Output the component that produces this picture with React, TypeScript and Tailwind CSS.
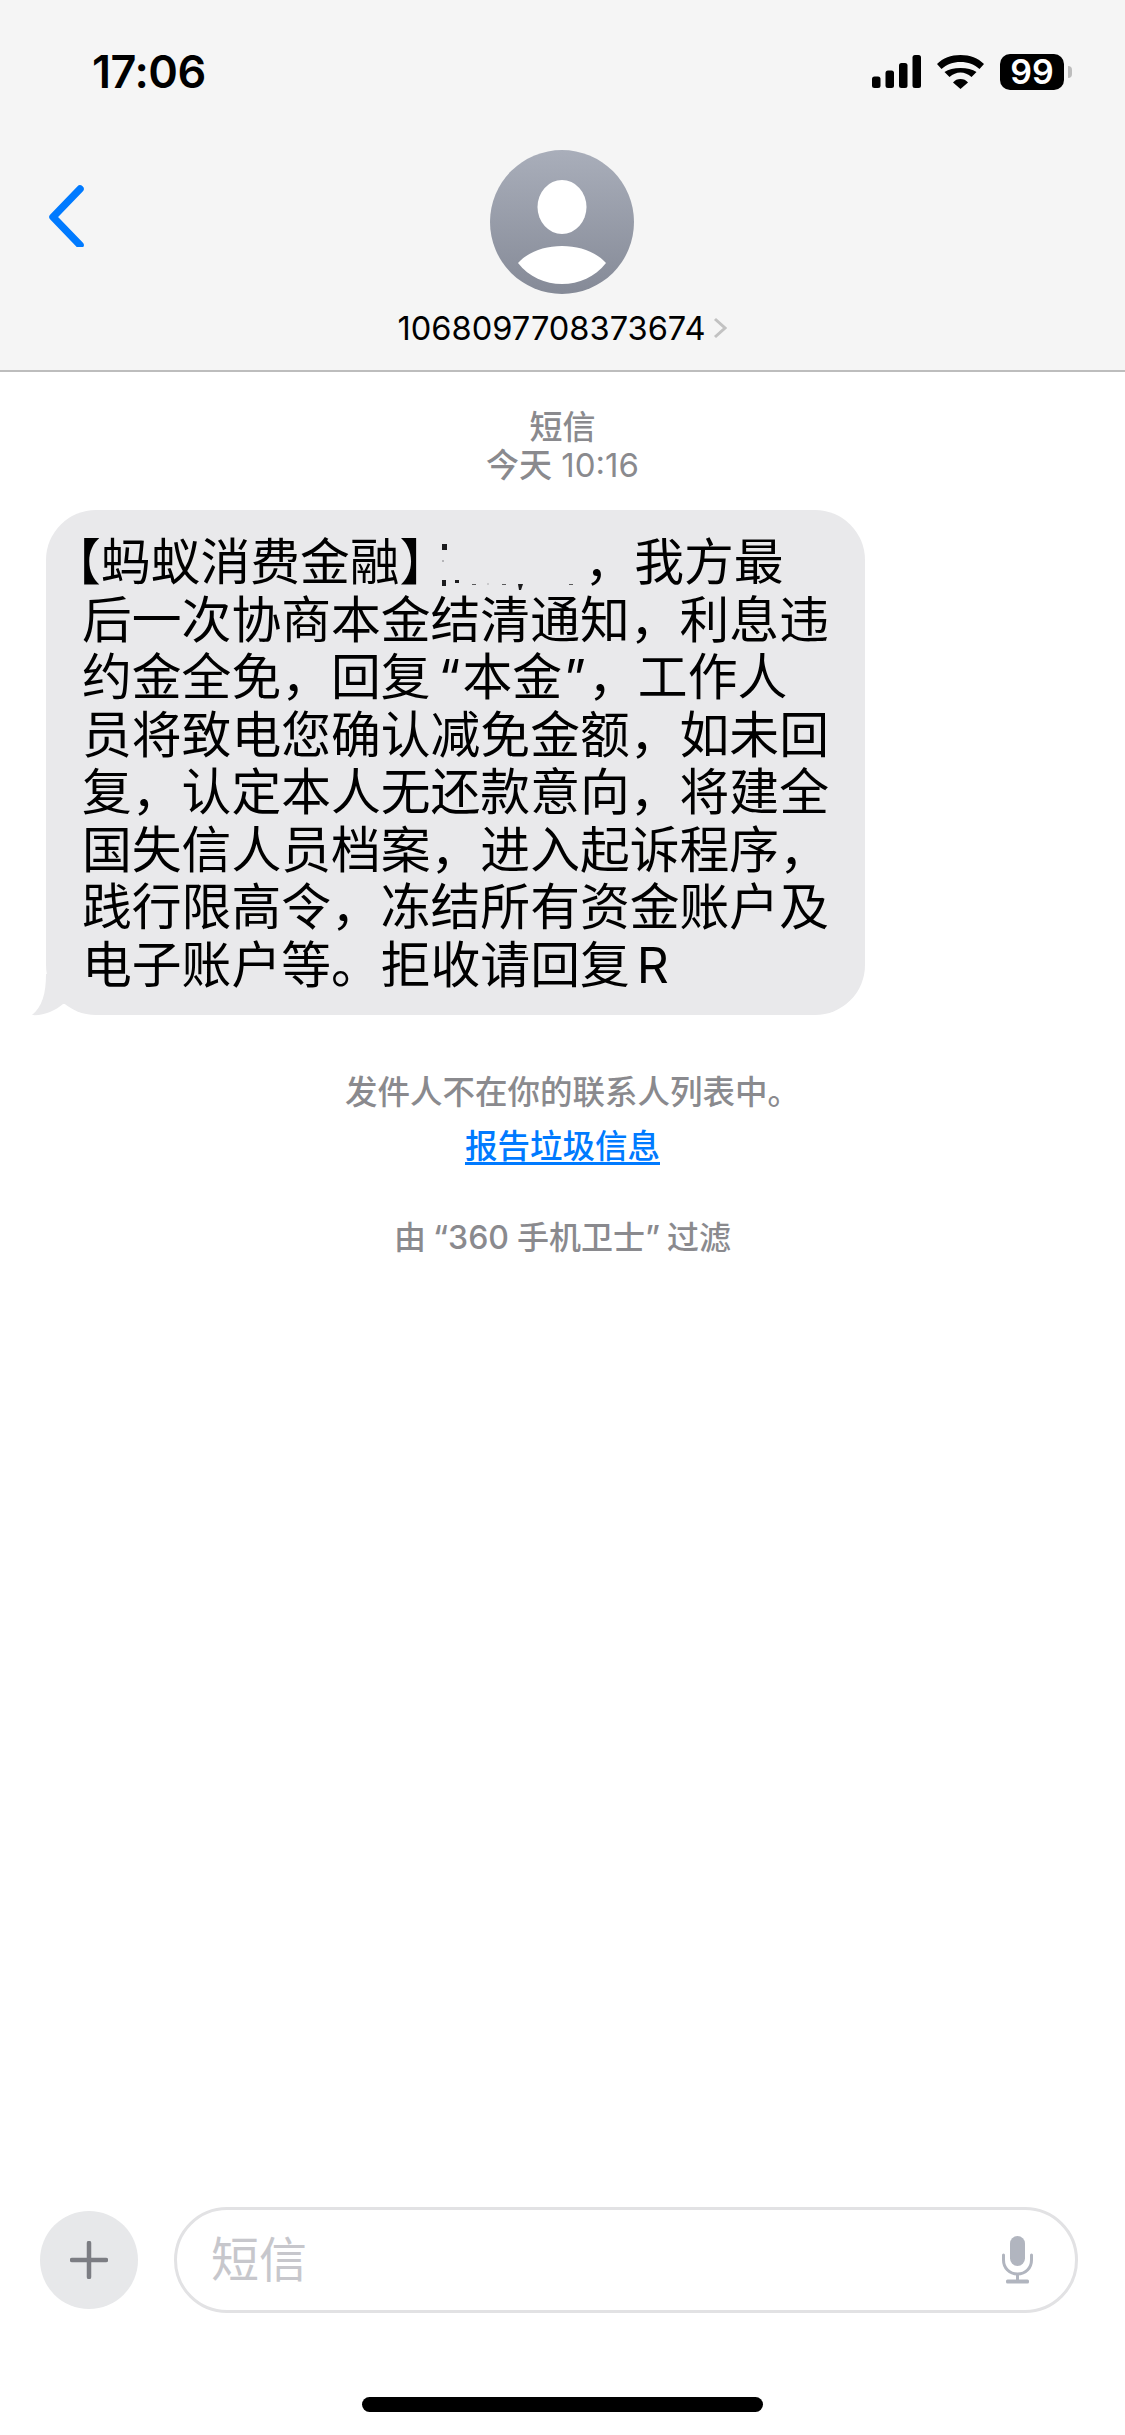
const cjk = "font-['Inter','Noto_Sans_CJK_SC',sans-serif]";

function Signal() {
  return (
    <svg width="49" height="33" viewBox="0 0 49 33" fill="#000" className="block">
      <rect x="0" y="21.500" width="8.500" height="11.500" rx="2.500" />
      <rect x="13.500" y="15.500" width="8.500" height="17.500" rx="2.500" />
      <rect x="27" y="8" width="8.500" height="25" rx="2.500" />
      <rect x="40.500" y="0" width="8.500" height="33" rx="2.500" />
    </svg>
  );
}

function Wifi() {
  return (
    <svg width="47" height="34" viewBox="0 0 47 34" fill="#000" className="block">
      <path d="M0 9C6 3 14 0 23.500 0S41 3 47 9L42.500 14C37.500 9.500 31 7 23.500 7S9.500 9.500 4.500 14Z" />
      <path d="M7.500 17C11.500 14.500 17 13 23.500 13S35.500 14.500 39.500 17L34.500 22C31 19 27.500 17.500 23.500 17.500S16 19 12.500 22Z" />
      <path d="M16 27.500C18 25 20.500 24 23.500 24S29 25 31 27.500L23.500 34Z" />
    </svg>
  );
}

function Avatar() {
  return (
    <svg width="144" height="144" viewBox="0 0 144 144" className="block">
      <defs>
        <linearGradient id="avatarFill" x1="0" y1="0" x2="0" y2="1">
          <stop offset="0" stopColor="#a9aeba" />
          <stop offset="1" stopColor="#858a97" />
        </linearGradient>
      </defs>
      <circle cx="72" cy="72" r="72" fill="url(#avatarFill)" />
      <ellipse cx="72" cy="57" rx="24.500" ry="27" fill="#fff" />
      <path d="M28 113C38 102 54 96 72 96s34 6 44 17c-11 14-27 21-44 21s-33-7-44-21z" fill="#fff" />
    </svg>
  );
}

function Smear() {
  return (
    <svg width="144" height="57" viewBox="0 0 144 57" className="-ml-[9px] block shrink-0">
      <g fill="#1c1c1e">
        <rect x="2" y="10" width="5" height="6" />
        <rect x="2" y="26" width="2" height="2" opacity="0.25" />
        <rect x="2" y="46" width="4" height="6" />
        <rect x="15" y="46" width="4" height="3" />
        <rect x="32" y="50" width="4" height="1" opacity="0.7" />
        <rect x="47" y="49" width="2" height="2" opacity="0.15" />
        <rect x="62" y="50" width="4" height="1" opacity="0.7" />
        <path d="M78 50h5l-2 6h-2z" />
        <rect x="129" y="50" width="4" height="1" opacity="0.7" />
      </g>
    </svg>
  );
}

function Mic() {
  return (
    <svg width="33" height="48" viewBox="0 0 33 48" fill="none" className="block">
      <rect x="9" y="0" width="15" height="30" rx="7.500" fill="#b1b5bf" />
      <path d="M2.500 19v5c0 8 6 14 14 14s14-6 14-14v-5" stroke="#b1b5bf" strokeWidth="3" strokeLinecap="round" />
      <path d="M16.500 38v6" stroke="#b1b5bf" strokeWidth="3" />
      <rect x="5" y="43.500" width="23" height="4" rx="1.500" fill="#b1b5bf" />
    </svg>
  );
}

export default function App() {
  return (
    <div className={`flex h-[2435px] w-[1125px] flex-col overflow-hidden bg-white ${cjk}`}>
      <header className="h-[372px] shrink-0 border-b-2 border-[#bdbdbd] bg-[#f5f5f5] pt-[45px]">
        <div className="flex h-[53px] items-center justify-between pl-[92px] pr-[61px]">
          <span className="text-[45px] leading-none font-semibold tracking-[-0.5px] text-black">17:06</span>
          <div className="flex items-center">
            <Signal />
            <div className="ml-[16px]"><Wifi /></div>
            <div className="relative ml-[16px] flex h-[36px] w-[64px] items-center justify-center rounded-[10px] bg-black">
              <span className="text-[34px] leading-none font-semibold text-white">99</span>
              <span className="absolute -right-[8px] top-[12px] h-[12px] w-[4px] rounded-r-full bg-[#bdbdbd]" />
            </div>
          </div>
        </div>
        <div className="grid grid-cols-[1fr_auto_1fr] pt-[52px]">
          <div className="pl-[47px] pt-[33px]">
            <svg width="40" height="64" viewBox="0 0 40 64" fill="none" className="block">
              <path d="M33 6L6 34l27 28" stroke="#007aff" strokeWidth="7.500" strokeLinecap="round" strokeLinejoin="round" />
            </svg>
          </div>
          <div className="flex flex-col items-center">
            <Avatar />
            <div className="mt-[14px] flex items-center">
              <span className="text-[32.600px] leading-[40px] text-black">1068097708373674</span>
              <svg width="14" height="22" viewBox="0 0 14 22" fill="none" className="ml-[8px]">
                <path d="M2 2l10 9-10 9" stroke="#c2c2c2" strokeWidth="3" />
              </svg>
            </div>
          </div>
          <div />
        </div>
      </header>

      <main className="flex flex-1 flex-col">
        <div className="mt-[36px] flex flex-col items-center text-[33px] leading-[38px] text-[#8a8a8e]">
          <span className="font-medium">短信</span>
          <span><span className="font-medium">今天</span> 10:16</span>
        </div>

        <div className="relative ml-[46px] mt-[26px] h-[505px] w-[819px] rounded-[50px] bg-[#e9e9eb] pl-[36px] pt-[24px] text-[49.800px] leading-[57.500px] text-black">
          <div className="-ml-[31px] flex h-[57.500px] whitespace-nowrap">
            <span>【蚂蚁消费金融】</span>
            <Smear />
            <span>，我方最</span>
          </div>
          <div className="h-[57.500px] whitespace-nowrap">后一次协商本金结清通知，利息违</div>
          <div className="h-[57.500px] whitespace-nowrap">
            约金全免，回复<span className="ml-[8px] mr-[2px]">“</span>本金<span className="mx-[2px]">”</span>，工作人
          </div>
          <div className="h-[57.500px] whitespace-nowrap">员将致电您确认减免金额，如未回</div>
          <div className="h-[57.500px] whitespace-nowrap">复，认定本人无还款意向，将建全</div>
          <div className="h-[57.500px] whitespace-nowrap">国失信人员档案，进入起诉程序，</div>
          <div className="h-[57.500px] whitespace-nowrap">践行限高令，冻结所有资金账户及</div>
          <div className="h-[57.500px] whitespace-nowrap">
            电子账户等。拒收请回复<span className="ml-[7px]">R</span>
          </div>
          <svg width="40" height="42" viewBox="0 0 40 42" className="absolute -left-[14px] bottom-[-1px]">
            <path d="M14 0C14 20 10 33 0 41C11 42 23 37 31 30L40 30L40 0Z" fill="#e9e9eb" />
          </svg>
        </div>

        <div className="mt-[56px] flex flex-col items-center">
          <span className="pl-[20px] text-[32.500px] leading-[44px] font-medium text-[#8a8a8e]">发件人不在你的联系人列表中。</span>
          <span className="mt-[10px] text-[32.500px] leading-[44px] font-medium text-[#007aff] underline decoration-[3px] underline-offset-[4px]">报告垃圾信息</span>
          <span className="mt-[47px] text-[32px] leading-[44px] font-medium text-[#8a8a8e]">
            由<span className="ml-[7px]">“</span>360<span className="ml-[8px]">手机卫士</span>”<span className="ml-[7px]">过滤</span>
          </span>
        </div>
      </main>

      <footer className="flex shrink-0 flex-col">
        <div className="flex items-center pl-[40px]">
          <div className="flex h-[98px] w-[98px] items-center justify-center rounded-full bg-[#e7e8ea]">
            <svg width="38" height="38" viewBox="0 0 38 38" fill="none">
              <path d="M19 2v34M2 19h34" stroke="#7c7d83" strokeWidth="4.500" strokeLinecap="round" />
            </svg>
          </div>
          <div className="ml-[36px] flex h-[106px] w-[904px] items-center justify-between rounded-[53px] border-[3px] border-[#e2e2e4] pl-[34px] pr-[41px]">
            <span className="text-[48px] leading-none text-[#c7c7cc]">短信</span>
            <Mic />
          </div>
        </div>
        <div className="mx-auto mb-[23px] mt-[84px] h-[15px] w-[401px] rounded-full bg-black" />
      </footer>
    </div>
  );
}
